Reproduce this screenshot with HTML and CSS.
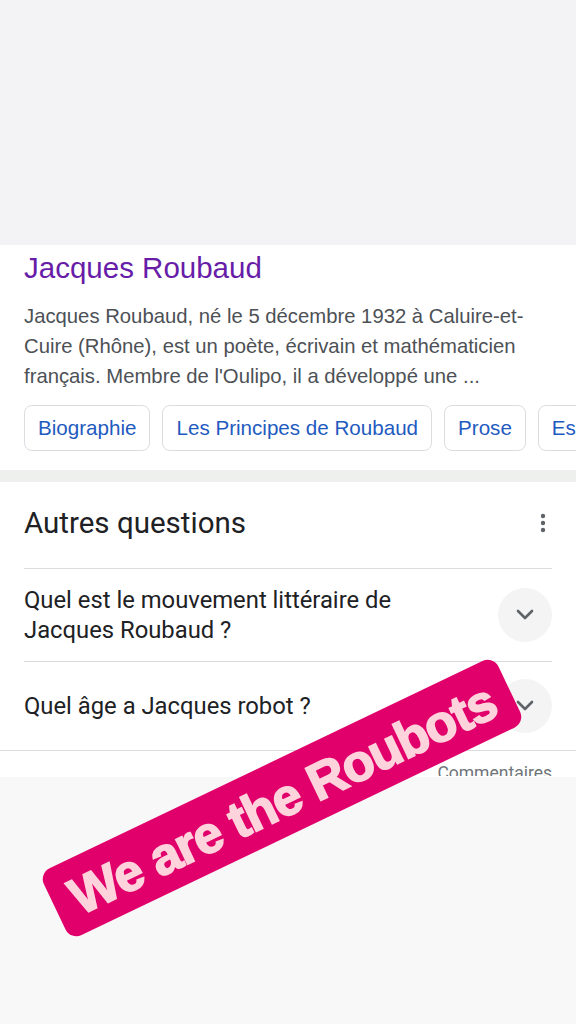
FILE: index.html
```html
<!DOCTYPE html>
<html lang="fr">
<head>
<meta charset="utf-8">
<title>Jacques Roubaud</title>
<link rel="stylesheet" href="styles.css">
</head>
<body>
<div class="page">
  <div class="top-space"></div>

  <section class="result">
    <a class="result-title">Jacques Roubaud</a>
    <p class="snippet">Jacques Roubaud, né le 5 décembre 1932 à Caluire-et-Cuire (Rhône), est un poète, écrivain et mathématicien français. Membre de l'Oulipo, il a développé une ...</p>
    <div class="chips">
      <span class="chip">Biographie</span>
      <span class="chip">Les Principes de Roubaud</span>
      <span class="chip">Prose</span>
      <span class="chip">Essais</span>
    </div>
  </section>

  <div class="band"></div>

  <section class="questions">
    <div class="q-inner">
      <div class="q-header">
        <h2>Autres questions</h2>
        <svg class="dots" width="8" height="22" viewBox="0 0 8 22"><circle cx="4" cy="4" r="2.2"/><circle cx="4" cy="11" r="2.2"/><circle cx="4" cy="18" r="2.2"/></svg>
      </div>
      <div class="q-row">
        <span class="q-text">Quel est le mouvement littéraire de Jacques Roubaud ?</span>
        <span class="chev"><svg width="20" height="12" viewBox="0 0 20 12"><path d="M3 2 L10 9 L17 2" fill="none" stroke="#5f6368" stroke-width="2.6" stroke-linecap="round" stroke-linejoin="round"/></svg></span>
      </div>
      <div class="q-row last">
        <span class="q-text">Quel âge a Jacques robot ?</span>
        <span class="chev"><svg width="20" height="12" viewBox="0 0 20 12"><path d="M3 2 L10 9 L17 2" fill="none" stroke="#5f6368" stroke-width="2.6" stroke-linecap="round" stroke-linejoin="round"/></svg></span>
      </div>
    </div>
    <div class="q-footer"><span>Commentaires</span></div>
  </section>

  <div class="bottom-space"></div>

  <div class="sticker">We are the Roubots</div>
</div>
</body>
</html>
```

FILE: styles.css
```css
html, body {
  margin: 0;
  padding: 0;
}
body {
  width: 576px;
  height: 1024px;
  overflow: hidden;
  background: #f8f8f8;
  font-family: "Liberation Sans", Arial, sans-serif;
}
.page {
  position: relative;
  width: 576px;
  height: 1024px;
  overflow: hidden;
}
.top-space {
  height: 245px;
  background: #f3f3f6;
}
.result {
  background: #fff;
  padding: 6px 0 19px 24px;
  overflow: hidden;
}
.result-title {
  display: block;
  color: #681da8;
  font-size: 29.5px;
  line-height: 34px;
  text-decoration: none;
}
.snippet {
  margin: 16px 0 0 0;
  width: 522px;
  color: #4d5156;
  font-size: 20.3px;
  line-height: 30px;
}
.chips {
  display: flex;
  gap: 12px;
  margin-top: 14px;
  white-space: nowrap;
}
.chip {
  flex: none;
  box-sizing: border-box;
  height: 46px;
  padding: 0 13px;
  border: 1px solid #dadce0;
  border-radius: 8px;
  display: flex;
  align-items: center;
  color: #1f5bbf;
  font-size: 20.6px;
}
.band {
  height: 12px;
  background: #eef0ee;
}
.questions {
  background: #fff;
  height: 295px;
  overflow: hidden;
}
.q-inner {
  padding: 0 24px;
  border-bottom: 1px solid #dadce0;
}
.q-header {
  display: flex;
  align-items: center;
  justify-content: space-between;
  padding: 24px 0 28px 0;
  border-bottom: 1px solid #dadce0;
}
.q-header h2 {
  margin: 0;
  font-family: Roboto, "Liberation Sans", sans-serif;
  font-weight: 400;
  font-size: 29.5px;
  line-height: 34px;
  color: #202124;
}
.dots {
  fill: #5f6368;
  margin-right: 5px;
}
.q-row {
  display: flex;
  align-items: center;
  justify-content: space-between;
  min-height: 54px;
  padding: 16px 0;
  border-bottom: 1px solid #dadce0;
}
.q-row.last {
  border-bottom: none;
  padding: 17px 0;
}
.q-text {
  font-family: Roboto, "Liberation Sans", sans-serif;
  font-size: 23.8px;
  line-height: 30px;
  color: #202124;
  max-width: 420px;
}
.chev {
  flex: none;
  width: 54px;
  height: 54px;
  border-radius: 50%;
  background: #f4f4f5;
  display: flex;
  align-items: center;
  justify-content: center;
}
.q-footer {
  height: 25px;
  padding: 0 24px;
  text-align: right;
  overflow: hidden;
}
.q-footer span {
  display: inline-block;
  padding-top: 12px;
  font-family: Roboto, "Liberation Sans", sans-serif;
  font-size: 17.5px;
  line-height: 20px;
  color: #70757a;
}
.bottom-space {
  height: 247px;
  background: #f8f8f8;
}
.sticker {
  position: absolute;
  left: 30px;
  top: 761px;
  width: 504px;
  height: 74px;
  border-radius: 12px;
  background: #e1006b;
  color: #ffd3dc;
  font-family: "Liberation Sans", Arial, sans-serif;
  font-weight: 700;
  font-size: 52px;
  line-height: 76px;
  text-align: center;
  white-space: nowrap;
  transform: rotate(-25.6deg);
  letter-spacing: -1.2px;
  -webkit-text-stroke: 1.6px #ffd3dc;
}
```
